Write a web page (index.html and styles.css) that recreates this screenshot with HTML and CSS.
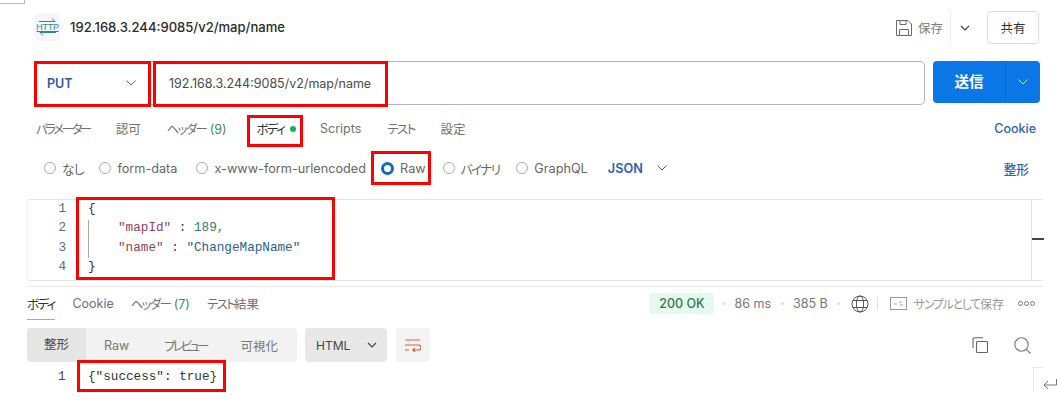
FILE: index.html
```html
<!DOCTYPE html>
<html lang="ja">
<head>
<meta charset="utf-8">
<title>192.168.3.244:9085/v2/map/name</title>
<link rel="stylesheet" href="styles.css">
</head>
<body>
<div class="page">
  <div class="corner"></div>
  <header class="head">
    <div class="http-icon">
      <svg class="arrow-up" width="17" height="4" viewBox="0 0 17 4" fill="none" stroke="#2b8a8f" stroke-width="1"><path d="M0 3.5h16l-3-3"/></svg>
      <span class="http-text">HTTP</span>
      <svg class="arrow-down" width="17" height="4" viewBox="0 0 17 4" fill="none" stroke="#2b8a8f" stroke-width="1"><path d="M17 .5H1l3 3"/></svg>
    </div>
    <div class="head-title">192.168.3.244:9085/v2/map/name</div>
    <div class="head-actions">
      <svg class="save-icon" width="16" height="16" viewBox="0 0 16 16" fill="none" stroke="#6b6b6b" stroke-width="1">
        <path d="M.5 .5h11.5l3.5 3.5v11.5H.5zM4 .5v4h6v-4M3.5 15.5v-6h9v6"/>
      </svg>
      <span class="save-text">保存</span>
      <span class="head-divider"></span>
      <svg class="head-chev" width="10" height="6" viewBox="0 0 10 6" fill="none" stroke="#444" stroke-width="1.2"><path d="M1 1l4 4 4-4"/></svg>
      <button class="share">共有</button>
    </div>
  </header>

  <section class="url-row">
    <div class="url-box">
      <div class="method"><span>PUT</span>
        <svg width="10" height="6" viewBox="0 0 10 6" fill="none" stroke="#666" stroke-width="1"><path d="M.5 .5l4.5 4.5 4.5-4.5"/></svg>
      </div>
      <div class="url-text">192.168.3.244:9085/v2/map/name</div>
    </div>
    <div class="send">
      <span class="send-label">送信</span>
      <span class="send-arrow">
        <svg width="10" height="6" viewBox="0 0 10 6" fill="none" stroke="#cfe4fb" stroke-width="1"><path d="M.5 .5l4.5 4.5 4.5-4.5"/></svg>
      </span>
    </div>
  </section>

  <nav class="req-tabs">
    <span class="tab t1 kana tight">パラメーター</span>
    <span class="tab t2">認可</span>
    <span class="tab t3"><span class="kana">ヘッダー</span> <em>(9)</em></span>
    <span class="tab t4"><span class="kana">ボディ</span><i class="dot"></i></span>
    <span class="tab t5">Scripts</span>
    <span class="tab t6 kana">テスト</span>
    <span class="tab t7">設定</span>
    <span class="cookie">Cookie</span>
  </nav>

  <div class="body-types">
    <label class="opt o1"><i class="radio"></i><span class="nashi">なし</span></label>
    <label class="opt o2"><i class="radio"></i>form-data</label>
    <label class="opt o3"><i class="radio"></i>x-www-form-urlencoded</label>
    <label class="opt o4"><i class="radio on"></i>Raw</label>
    <label class="opt o5"><i class="radio"></i><span class="kana">バイナリ</span></label>
    <label class="opt o6"><i class="radio"></i>GraphQL</label>
    <span class="json">JSON</span>
    <svg class="json-chev" width="10" height="6" viewBox="0 0 10 6" fill="none" stroke="#2f5fb3" stroke-width="1"><path d="M.5 .5l4.5 4.5 4.5-4.5"/></svg>
    <span class="beautify">整形</span>
  </div>

  <section class="editor">
    <div class="gutter"><div>1</div><div>2</div><div>3</div><div>4</div></div>
    <div class="code">
      <div class="line p">{</div>
      <div class="line indent"><span class="k">"mapId"</span><span class="c">:</span><span class="n">189,</span></div>
      <div class="line indent"><span class="k">"name"</span><span class="c">:</span><span class="s">"ChangeMapName"</span></div>
      <div class="line p">}</div>
    </div>
    <i class="guide"></i>
    <i class="scroll-mark"></i>
  </section>
  <div class="split"></div>

  <div class="res-tabs">
    <span class="rt r1 kana">ボディ</span>
    <span class="rt r2">Cookie</span>
    <span class="rt r3"><span class="kana">ヘッダー</span> <em>(7)</em></span>
    <span class="rt r4"><span class="kana">テスト</span>結果</span>
    <div class="status">
      <span class="ok">200 OK</span>
      <i class="sdot"></i><span>86 ms</span><i class="sdot"></i><span>385 B</span><i class="sdot"></i>
      <svg class="globe" width="18" height="18" viewBox="0 0 18 18" fill="none" stroke="#555" stroke-width="1">
        <circle cx="9" cy="9" r="8"/><ellipse cx="9" cy="9" rx="3.6" ry="8"/><path d="M2 5.5h14M2 12.5h14"/>
      </svg>
      <i class="vline"></i>
      <svg class="eg" width="17" height="13" viewBox="0 0 17 13" fill="none" stroke="#999" stroke-width="1"><rect x=".5" y=".5" width="16" height="12"/><path d="M4 7h3M9 5h3M10 8h3" stroke-width=".9"/></svg>
      <span class="save-sample"><span class="kana wide">サンプルとして</span>保存</span>
      <span class="more"><b></b><b></b><b></b></span>
    </div>
  </div>

  <div class="view-row">
    <div class="segments">
      <span class="seg active">整形</span>
      <span class="seg s2">Raw</span>
      <span class="seg s3 kana">プレビュー</span>
      <span class="seg s4">可視化</span>
    </div>
    <div class="format"><span>HTML</span>
      <svg width="10" height="6" viewBox="0 0 10 6" fill="none" stroke="#444" stroke-width="1.2"><path d="M1 1l4 4 4-4"/></svg>
    </div>
    <div class="wrap">
      <svg width="16" height="13" viewBox="0 0 16 13" fill="none" stroke="#c9663f" stroke-width="1.2"><path d="M0 1h15M0 6h13.5a2.3 2.3 0 0 1 0 5H8M10 8.8L7.8 11l2.2 2M0 11h4"/></svg>
    </div>
    <div class="tools">
      <svg width="16" height="16" viewBox="0 0 16 16" fill="none" stroke="#666" stroke-width="1.1"><rect x="4.5" y="4.5" width="11" height="11" rx="1"/><path d="M1 11V2a1.2 1.2 0 0 1 1.2-1.2H11"/></svg>
      <svg width="17" height="17" viewBox="0 0 17 17" fill="none" stroke="#777" stroke-width="1.1"><circle cx="7.5" cy="7.5" r="6.7"/><path d="M12.3 12.3l4.2 4.2"/></svg>
    </div>
  </div>

  <div class="response">
    <span class="res-no">1</span>
    <code class="res-code">{"success": true}</code>
    <i class="res-corner"></i>
    <svg class="enter" width="14" height="11" viewBox="0 0 14 11" fill="none" stroke="#777" stroke-width="1"><path d="M13.5 0v6H1M5 2L1 6l4 4"/></svg>
  </div>

  <i class="mark m1"></i>
  <i class="mark m2"></i>
  <i class="mark m3"></i>
  <i class="mark m4"></i>
  <i class="mark m5"></i>
  <i class="mark m6"></i>
</div>
</body>
</html>
```

FILE: styles.css
```css
* { box-sizing: border-box; }
html, body { margin: 0; padding: 0; background: #fff; }
body {
  font-family: Inter, "Noto Sans CJK JP", sans-serif;
  font-size: 12px;
  color: #6b6b6b;
  overflow: hidden;
}
.page { position: relative; width: 1057px; height: 408px; overflow: hidden; }
i, em { font-style: normal; display: inline-block; }
em { color: #3f8a5f; }
.kana { font-feature-settings: "palt"; letter-spacing: -1.7px; white-space: nowrap; }
.kana.tight { letter-spacing: -2.5px; }
.kana.wide { letter-spacing: -1.3px; }

.corner { position: absolute; left: 0; top: 0; width: 25px; height: 4px; border: 1px solid #bbb; border-width: 0 1px 1px 0; }

.head { height: 61px; padding: 11px 18px 0 35px; display: flex; align-items: flex-start; }
.http-icon {
  width: 25px; height: 28px; margin-top: 2px; background: #f6f6f6; border-radius: 4px;
  display: flex; flex-direction: column; align-items: center; justify-content: center;
}
.http-icon svg { display: block; }
.http-text { font-size: 9px; line-height: 10px; color: #2b8a8f; letter-spacing: -.3px; text-decoration: underline; font-family: "Liberation Sans", sans-serif; }
.head-title { margin: 7px 0 0 10px; font-size: 13.05px; line-height: 18px; font-weight: 500; color: #2b2b2b; }
.head-actions { margin-left: auto; display: flex; align-items: center; height: 33px; }
.save-text { margin-left: 6px; color: #7a7a7a; font-size: 12.5px; }
.head-divider { width: 1px; height: 33px; background: #ececec; margin-left: 7px; }
.head-chev { margin-left: 9px; }
.share {
  margin-left: 17px; width: 52px; height: 33px; border: 1px solid #dedede; border-radius: 4px; background: #fff;
  font: 12.5px Inter, "Noto Sans CJK JP", sans-serif; color: #333; padding: 0;
}

.url-row { display: flex; height: 43px; padding-left: 34px; }
.url-box {
  width: 891px; height: 44px; border: 1px solid #b5b5b5; border-left: 0; border-radius: 0 5px 5px 0;
  display: flex; align-items: center;
}
.method { width: 117px; padding: 0 15px 0 13px; display: flex; justify-content: space-between; align-items: center; font-weight: 600; color: #2f5a9e; font-size: 12.5px; }
.url-text { margin-left: 18px; font-size: 12.5px; color: #4a4a4a; }
.send {
  margin-left: 8px; width: 107px; height: 42px; border-radius: 4px; background: #0b76e6; color: #fff;
  display: flex; align-items: center;
}
.send-label { width: 73px; text-align: center; font-weight: 700; font-size: 14.5px; color: #fff; border-right: 1px solid #0a6bd1; line-height: 42px; }
.send-arrow { flex: 1; display: flex; justify-content: center; }

.req-tabs { display: flex; align-items: center; height: 25px; margin-top: 12px; padding-left: 36px; font-size: 12.5px; color: #707070; }
.tab { white-space: nowrap; }
.t2 { margin-left: 26px; }
.t3 { margin-left: 26px; }
.t4 { margin-left: 30px; color: #333; display: flex; align-items: center; }
.t5 { margin-left: 24px; }
.t6 { margin-left: 26px; }
.t7 { margin-left: 26px; }
.dot { width: 6px; height: 6px; border-radius: 50%; background: #16b050; margin-left: 6px; }
.cookie { margin-left: auto; margin-right: 21px; font-weight: 500; color: #2f5fb3; }

.body-types { display: flex; align-items: center; height: 26px; margin-top: 14px; padding-left: 44px; font-size: 12.7px; color: #666; }
.opt { display: flex; align-items: center; white-space: nowrap; }
.radio { width: 12px; height: 12px; border: 1px solid #a8a8a8; border-radius: 50%; margin-right: 6px; background: #fff; }
.radio.on { width: 13px; height: 13px; border: 3.5px solid #0e69c4; margin-right: 6px; }
.nashi { letter-spacing: -2px; }
.o2 { margin-left: 16px; }
.o3 { margin-left: 19px; }
.o4 { margin-left: 15px; }
.o5 { margin-left: 17px; }
.o6 { margin-left: 17px; }
.json { margin-left: 20px; font-weight: 600; color: #2f5fb3; }
.json-chev { margin-left: 14px; }
.beautify { margin-left: auto; margin-right: 28px; color: #2f5fb3; font-weight: 500; }

.editor {
  position: relative; display: flex; height: 82px; margin: 18px 14px 0 27px; border: 1px solid #e4e4e4; border-left-color: #eee; border-right: 0; border-radius: 3px 0 0 3px;
  font-family: "Liberation Mono", monospace; font-size: 12.67px; line-height: 19.4px; color: #333;
}
.gutter { width: 38px; margin-top: -1px; text-align: right; color: #4f7280; }
.code { margin: -1px 0 0 22px; color: #444; }
.line { height: 19.4px; white-space: pre; }
.indent { padding-left: 30px; display: flex; }
.c { margin: 0 7.6px; }
.k { color: #93405a; }
.n { color: #2f7d62; }
.s { color: #2b5f86; }
.p { color: #333; }
.guide { position: absolute; left: 60px; top: 20px; width: 1px; height: 38px; background: #a8a8a8; }
.scroll-mark { position: absolute; left: 1004px; top: 38px; width: 12px; height: 2px; background: #444; }
.editor::after { content: ""; position: absolute; right: 11px; top: 0; bottom: 0; width: 1px; background: #e4e4e4; }
.split { height: 1px; margin: 5px 14px 0 27px; background: #e9e9e9; }

.res-tabs { position: relative; display: flex; align-items: center; height: 33px; padding: 0 22px 0 27px; color: #707070; font-size: 12.5px; }
.r1 { color: #333; position: relative; }
.r1::after { content: ""; position: absolute; left: 0; right: -1px; top: 25px; height: 1px; background: #d99a78; }
.r2 { margin-left: 18px; }
.r3 { margin-left: 17px; }
.r4 { margin-left: 17px; }
.status { margin-left: auto; display: flex; align-items: center; color: #777; font-size: 12.5px; }
.ok { width: 65px; height: 21px; line-height: 21px; margin-right: -2px; text-align: center; background: #e6f9ee; color: #2f7d52; border-radius: 4px; font-weight: 500; }
.sdot { width: 3px; height: 3px; margin: 0 9.5px; background: #ddd; border-radius: 50%; }
.globe { margin-left: 1px; }
.vline { width: 1px; height: 13px; background: #ddd; margin: 0 12px 0 8px; }
.save-sample { margin-left: 7px; color: #999; font-size: 12px; white-space: nowrap; }
.more { display: flex; gap: 1px; margin-left: 14px; }
.more b { width: 5px; height: 5px; border: 1px solid #777; border-radius: 50%; }

.view-row { display: flex; align-items: stretch; height: 34px; margin-top: 8px; padding: 0 22px 0 27px; }
.segments { display: flex; width: 270px; background: #f2f2f2; border-radius: 4px; align-items: center; color: #777; font-size: 12.5px; white-space: nowrap; }
.seg.active { width: 59px; height: 34px; line-height: 34px; text-align: center; background: #e6e6e6; border-radius: 4px 0 0 4px; color: #444; }
.s2 { margin-left: 18px; }
.s3 { margin-left: 35px; letter-spacing: -2.9px; }
.s4 { margin-left: 34px; }
.format { width: 82px; margin-left: 8px; background: #e8e8e8; border-radius: 4px; display: flex; align-items: center; justify-content: space-between; padding: 0 10px 0 11px; color: #444; font-size: 12px; }
.wrap { width: 34px; margin-left: 9px; background: #f4f4f4; border-radius: 4px; display: flex; align-items: center; justify-content: center; }
.tools { margin-left: auto; display: flex; align-items: center; gap: 26px; padding-right: 4px; }

.response { position: relative; height: 30px; font-family: "Liberation Mono", monospace; font-size: 12.67px; line-height: 29px; color: #333; }
.res-no { position: absolute; left: 58px; top: 0; color: #444; }
.res-code { position: absolute; left: 88px; top: 0; font: inherit; }
.res-corner { position: absolute; left: 1033px; top: 5px; width: 10px; height: 25px; border: 1px solid #e8e8e8; border-width: 1px 0 0 1px; }
.enter { position: absolute; left: 1043px; top: 17px; }

.mark { position: absolute; border: 3px solid #f00; }
.m1 { left: 34px; top: 61px; width: 117px; height: 46px; }
.m2 { left: 153px; top: 61px; width: 235px; height: 46px; }
.m3 { left: 247px; top: 115px; width: 56px; height: 32px; }
.m4 { left: 371px; top: 151px; width: 60px; height: 34px; }
.m5 { left: 76px; top: 197px; width: 259px; height: 83px; }
.m6 { left: 77px; top: 360px; width: 149px; height: 32px; }
```
